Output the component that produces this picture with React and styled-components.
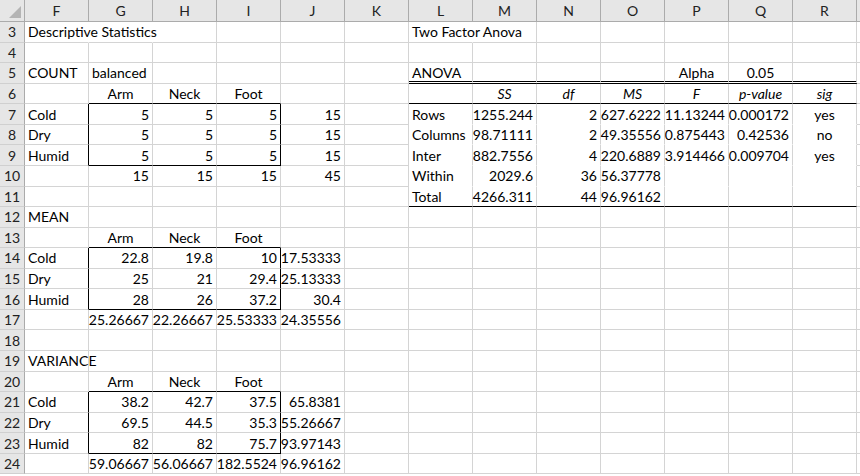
import React from 'react';
import styled, { createGlobalStyle } from 'styled-components';

const Global = createGlobalStyle`
  html,body{margin:0;padding:0;background:#fff;overflow:hidden;}
  body{font-family:Lato,"Liberation Sans",Arial,sans-serif;}
`;

const COLS = ['F','G','H','I','J','K','L','M','N','O','P','Q','R','S'];
const ROWS = Array.from({ length: 22 }, (_, i) => i + 3);
const GRID = '#d4d4d4';

const Sheet = styled.div`
  display:grid;
  grid-template-columns:25px repeat(13, 64px) 20px;
  grid-template-rows:22px repeat(22, 20.57px);
  width:860px;height:476px;overflow:hidden;
`;
const Corner = styled.div`
  background:#e6e6e6;border-right:1px solid #ababab;border-bottom:1px solid #ababab;
  position:relative;
  &::after{content:'';position:absolute;right:3px;bottom:3px;border-left:12px solid transparent;border-bottom:12px solid #b4b4b4;}
`;
const ColHead = styled.div`
  background:#e6e6e6;border-right:1px solid #ababab;border-bottom:1px solid #ababab;
  display:flex;align-items:center;justify-content:center;font-size:14px;color:#222;
`;
const RowHead = styled.div`
  background:#e6e6e6;border-right:1px solid #ababab;border-bottom:1px solid #d0d0d0;
  display:flex;align-items:center;justify-content:center;font-size:14px;color:#222;
`;
const Cell = styled.div`
  box-sizing:border-box;
  border-right:1px solid ${p => p.$br || GRID};
  border-bottom:${p => p.$double ? '3px double #000' : `1px solid ${p.$bb || GRID}`};
  display:flex;align-items:center;
  justify-content:${p => p.$align === 'r' ? 'flex-end' : p.$align === 'c' ? 'center' : 'flex-start'};
  padding:0 3px;font-size:14px;color:#000;white-space:nowrap;overflow:visible;
  font-style:${p => p.$italic ? 'italic' : 'normal'};
  padding-top:${p => p.$double ? '2px' : '0'};
`;

const D = {};
const put = (r, cells, align) => cells.forEach(([c, v, a]) => { D[c + r] = { v, a: a || align }; });
put(3, [['F', 'Descriptive Statistics'], ['L', 'Two Factor Anova']]);
put(5, [['F', 'COUNT'], ['G', 'balanced'], ['L', 'ANOVA'], ['P', 'Alpha', 'c'], ['Q', '0.05', 'c']]);
[6, 13, 20].forEach(r => put(r, [['G', 'Arm'], ['H', 'Neck'], ['I', 'Foot']], 'c'));
['SS', 'df', 'MS', 'F', 'p-value', 'sig'].forEach((v, i) => { D['MNOPQR'[i] + 6] = { v, a: 'c', i: true }; });
const block = (r0, labels, rows) => rows.forEach((vals, k) => {
  const r = r0 + k;
  if (labels[k]) D['F' + r] = { v: labels[k] };
  vals.forEach((v, j) => { D['GHIJ'[j] + r] = { v, a: 'r' }; });
});
const L3 = ['Cold', 'Dry', 'Humid'];
block(7, L3, [['5','5','5','15'],['5','5','5','15'],['5','5','5','15'],['15','15','15','45']]);
block(14, L3, [['22.8','19.8','10','17.53333'],['25','21','29.4','25.13333'],['28','26','37.2','30.4'],['25.26667','22.26667','25.53333','24.35556']]);
block(21, L3, [['38.2','42.7','37.5','65.8381'],['69.5','44.5','35.3','55.26667'],['82','82','75.7','93.97143'],['59.06667','56.06667','182.5524','96.96162']]);
put(12, [['F', 'MEAN']]);
put(19, [['F', 'VARIANCE']]);
const anova = [
  ['Rows','1255.244','2','627.6222','11.13244','0.000172','yes'],
  ['Columns','98.71111','2','49.35556','0.875443','0.42536','no'],
  ['Inter','882.7556','4','220.6889','3.914466','0.009704','yes'],
  ['Within','2029.6','36','56.37778'],
  ['Total','4266.311','44','96.96162'],
];
anova.forEach((row, k) => row.forEach((v, j) => {
  D['LMNOPQR'[j] + (7 + k)] = { v, a: j === 0 ? 'l' : j === 6 ? 'c' : 'r' };
}));

const inBox = (c, r) => 'GHI'.includes(c) && [7,8,9,14,15,16,21,22,23].includes(r);
const isAnova = c => 'LMNOPQR'.includes(c);

function borders(c, r) {
  const b = {};
  const ci = COLS.indexOf(c);
  // right edge: black when this cell or the next is box and other isn't
  const next = COLS[ci + 1];
  if (inBox(c, r) !== (next ? inBox(next, r) : false)) b.$br = '#000';
  if (inBox(c, r) !== inBox(c, r + 1)) b.$bb = '#000';
  if (isAnova(c)) {
    if (r === 5) b.$double = true;
    if (r === 6 || r === 11) b.$bb = '#000';
    if (r >= 7 && r <= 10) b.$bb = '#fff';
  }
  if ((c === 'F' || c === 'G' || c === 'L') && r === 3) b.$br = 'transparent';
  return b;
}

export default function App() {
  return (
    <>
      <Global />
      <Sheet>
        <Corner />
        {COLS.map(c => <ColHead key={c}>{c === 'S' ? '' : c}</ColHead>)}
        {ROWS.map(r => (
          <React.Fragment key={r}>
            <RowHead>{r}</RowHead>
            {COLS.map(c => {
              const d = D[c + r];
              return (
                <Cell key={c + r} $align={d && d.a} $italic={d && d.i} {...borders(c, r)}>
                  {d ? d.v : ''}
                </Cell>
              );
            })}
          </React.Fragment>
        ))}
      </Sheet>
    </>
  );
}
